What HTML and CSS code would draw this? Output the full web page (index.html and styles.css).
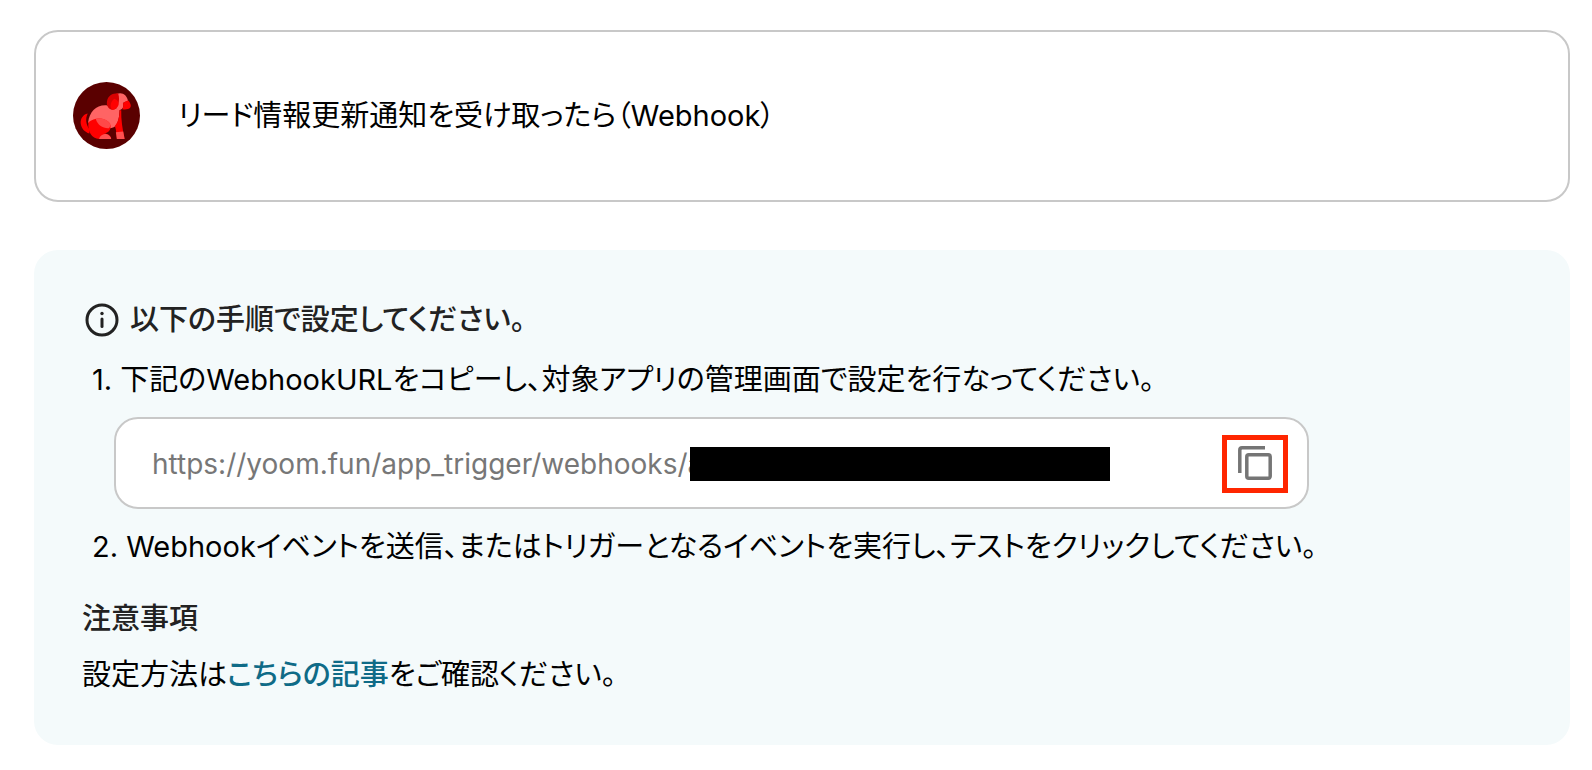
FILE: index.html
```
<!DOCTYPE html>
<html lang="ja">
<head>
    <meta charset="UTF-8">
    <meta name="viewport" content="width=device-width, initial-scale=1.0">
    <title>Webhookトリガー設定</title>
    <link rel="stylesheet" href="styles.css">
</head>
<body>

    <main class="container">
        <!-- トリガー名 -->
        <section class="trigger-card">
            <svg class="app-icon" viewBox="38 37 200 200" aria-hidden="true">
                <circle cx="138" cy="137" r="100" fill="#5a0000"/>
                <path d="M82 131C67 134 60 147 61 161C63 176 73 187 87 191L87 178C77 164 74 147 82 131Z" fill="#ff0000"/>
                <path d="M140 107C108 104 87 126 83 158C100 178 150 182 165 168C173 158 176 144 177 120L166 116Z" fill="#ff6464"/>
                <path d="M182 121C181 148 186 179 192 207H169C168 192 167 180 163 168C173 156 177 141 177 121Z" fill="#ff0000"/>
                <path d="M166 187L188 185L192 207H169Z" fill="#ff5050"/>
                <path d="M84 157C103 141 133 142 148 160C154 177 147 188 128 191C143 190 151 198 152 207H116C94 205 81 185 84 157Z" fill="#ff0000"/>
                <path d="M106 147C126 144 140 150 148 160C150 168 148 172 145 175C127 176 111 166 106 147Z" fill="#ff4848"/>
                <path d="M116 207C118 197 127 192 137 192C146 194 151 200 152 207Z" fill="#ff5050"/>
                <path d="M168 73C185 66 199 76 202 93L187 100C191 111 186 121 174 121C160 118 157 91 168 73Z" fill="#ff6464"/>
                <path d="M166 71C149 72 139 83 139 101C140 111 147 120 157 120C171 118 180 95 173 71C171 70 169 70 166 71Z" fill="#d80000"/>
                <path d="M161 87C171 90 175 97 174 106C170 115 164 120 157 120C147 117 148 97 161 87Z" fill="#ff0000"/>
                <path d="M187 101C191 94 197 94 203 92C209 98 213 108 209 113C204 119 193 120 185 118C188 113 189 107 187 101Z" fill="#ff0000"/>
            </svg>
            <h1 class="trigger-title">リード情報更新通知を受け取ったら（Webhook）</h1>
        </section>

        <!-- 設定手順 -->
        <section class="guide">
            <h2 class="guide-title">
                <svg class="info-icon" viewBox="0 0 40 40" aria-hidden="true">
                    <circle cx="20" cy="20" r="15" fill="none" stroke="#222" stroke-width="3"/>
                    <circle cx="20" cy="13.5" r="1.7" fill="#222"/>
                    <path d="M20 19V26.5" stroke="#222" stroke-width="3" stroke-linecap="round"/>
                </svg>
                以下の手順で設定してください。
            </h2>

            <ol class="steps">
                <li>
                    <label for="webhook-url">下記のWebhookURLをコピーし、対象アプリの管理画面で設定を行なってください。</label>
                    <div class="url-box">
                        <input class="url-input" id="webhook-url" type="text" value="https://yoom.fun/app_trigger/webhooks/a" readonly>
                        <span class="url-mask"></span>
                        <button class="copy-button" type="button" aria-label="コピー">
                            <svg class="copy-icon" viewBox="0 0 34 34" aria-hidden="true">
                                <path d="M1.8 27V4Q1.8 1.8 4 1.8H27" fill="none" stroke="#757575" stroke-width="3.5"/>
                                <rect x="8.8" y="8.8" width="23.4" height="23.4" rx="2" fill="none" stroke="#757575" stroke-width="3.5"/>
                            </svg>
                        </button>
                    </div>
                </li>
                <li>Webhookイベントを送信、またはトリガーとなるイベントを実行し、テストをクリックしてください。</li>
            </ol>

            <h3 class="notes-title">注意事項</h3>
            <p class="notes-text">設定方法は<a href="#">こちらの記事</a>をご確認ください。</p>
        </section>
    </main>

</body>
</html>
```
FILE: styles.css
```
/* --- 全体 --- */
* {
    box-sizing: border-box;
}

body {
    margin: 0;
    padding: 30px 22px 26px 34px;
    background-color: #ffffff;
    color: #000000;
    font-family: Inter, "Noto Sans CJK JP", sans-serif;
    font-size: 29px;
    line-height: 40px;
    font-feature-settings: "palt";
}

h1, h2, h3, p {
    margin: 0;
    font-size: inherit;
}

.container {
    display: flex;
    flex-direction: column;
    gap: 48px;
}

/* --- トリガーカード --- */
.trigger-card {
    display: flex;
    align-items: center;
    gap: 38px;
    padding: 50px 37px 51px;
    border: 2px solid #c8c8c8;
    border-radius: 24px;
}

.app-icon {
    width: 67px;
    height: 67px;
    flex: none;
}

.trigger-title {
    font-weight: 400;
}

/* --- 設定手順 --- */
.guide {
    padding: 50px 48px;
    background-color: #f4fafb;
    border-radius: 24px;
}

.guide-title {
    display: flex;
    align-items: center;
    gap: 8px;
    color: #222222;
    font-weight: 500;
}

.info-icon {
    width: 40px;
    height: 40px;
    flex: none;
}

.steps {
    margin: 20px 0 0;
    padding-left: 10px;
    list-style-position: inside;
}

.steps li::marker {
    font-variant-numeric: normal;
}

.url-box {
    display: flex;
    align-items: center;
    width: calc((100% - 24px) * 0.85);
    margin: 17px 0 18px 22px;
    padding: 16px 19px 14px 36px;
    background-color: #ffffff;
    border: 2px solid #c8c8c8;
    border-radius: 24px;
}

.url-input {
    width: 538px;
    padding: 0;
    border: 0;
    outline: none;
    background: none;
    color: #777777;
    font: inherit;
    font-size: 28px;
}

.url-mask {
    width: 420px;
    height: 34px;
    background-color: #000000;
}

.copy-button {
    display: flex;
    margin-left: auto;
    padding: 6px 11px 8px;
    background: none;
    border: 5px solid #ff2600;
    cursor: pointer;
}

.copy-icon {
    width: 34px;
    height: 34px;
}

/* --- 注意事項 --- */
.notes-title {
    margin-top: 32px;
    color: #222222;
    font-weight: 500;
}

.notes-text {
    margin-top: 16px;
}

.notes-text a {
    color: #0f6b87;
    font-weight: 500;
    text-decoration: none;
}
```
